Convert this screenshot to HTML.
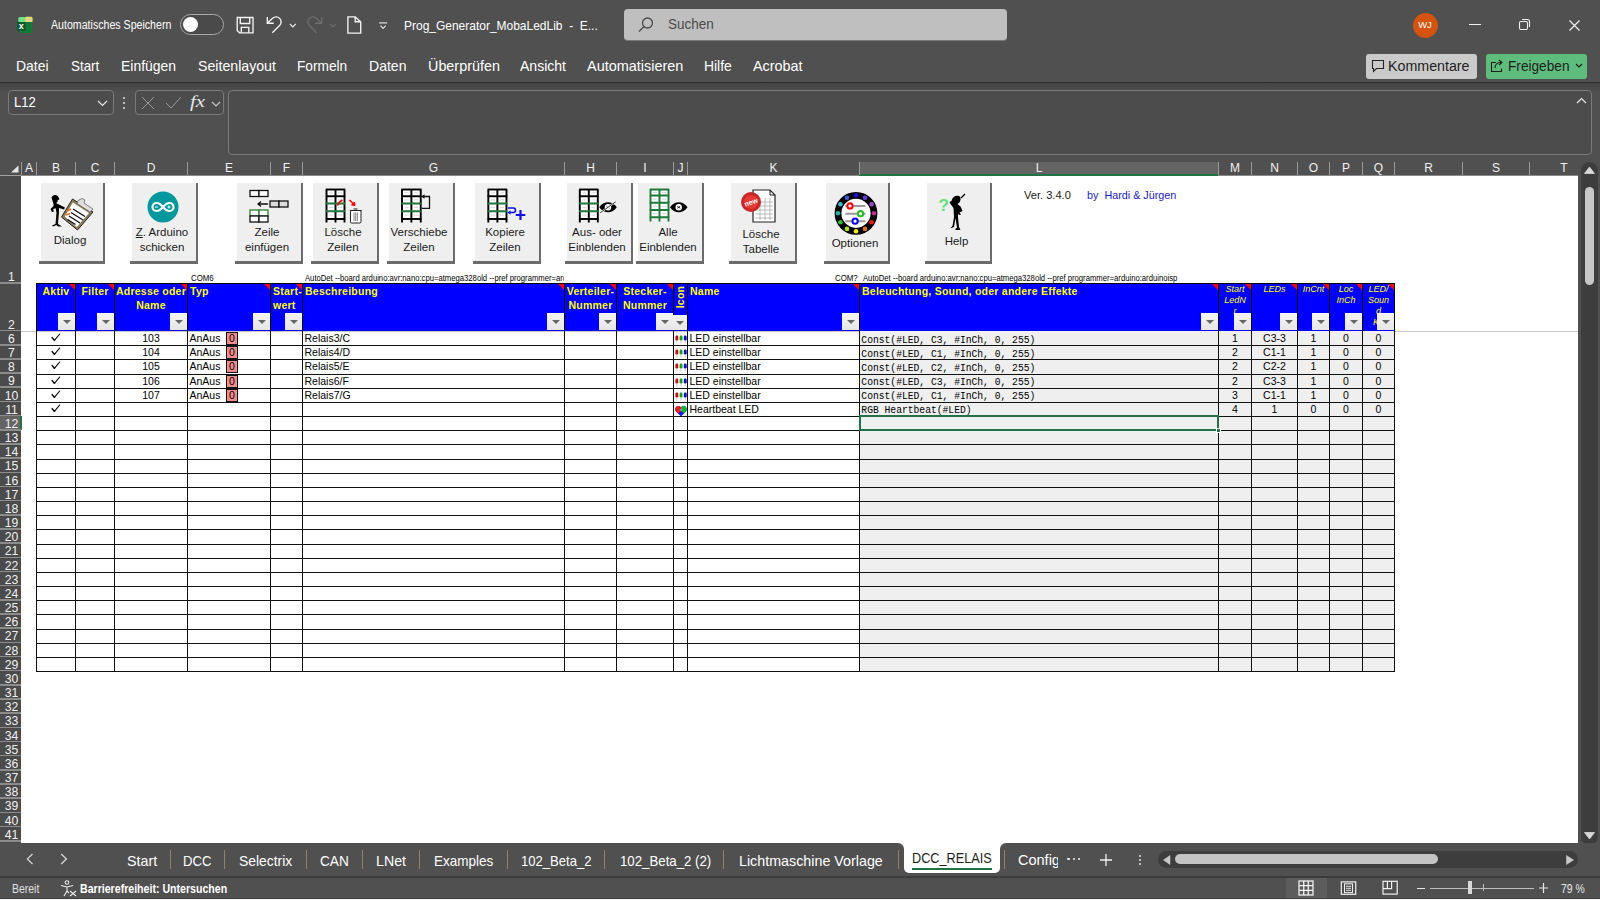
<!DOCTYPE html><html><head><meta charset="utf-8"><style>
*{margin:0;padding:0;box-sizing:border-box}
html,body{width:1600px;height:900px;overflow:hidden;background:#505050;font-family:"Liberation Sans", sans-serif;}
.a{position:absolute}
.ui{color:#fff;font-family:"Liberation Sans", sans-serif;white-space:nowrap;position:absolute}
.hd{position:absolute;color:#ffff00;font-weight:bold;font-size:10.5px;line-height:14px;white-space:nowrap;overflow:hidden;letter-spacing:0.25px}
.hi{position:absolute;color:#ffff00;font-style:italic;font-size:9px;line-height:11px;white-space:nowrap;overflow:hidden;font-weight:normal}
.c{position:absolute;font-size:10.5px;line-height:14.8px;color:#000;white-space:nowrap;overflow:hidden}
.m{position:absolute;font-family:"Liberation Mono",monospace;font-size:10.6px;line-height:14px;color:#000;white-space:nowrap;transform:scaleX(0.912);transform-origin:0 0;margin-top:1.5px}
.flt{position:absolute;width:17px;height:17px;background:linear-gradient(#f4f4f4,#e6e6e6);}
.flt:after{content:"";position:absolute;left:5px;top:7px;border-left:4px solid transparent;border-right:4px solid transparent;border-top:4px solid #666}
.rt{position:absolute;width:0;height:0;border-left:6px solid transparent;border-top:6px solid #ff0000}
.btn{position:absolute;background:#efefef;border-right:2px solid #6b6b6b;border-bottom:3px solid #6b6b6b;}
.bt{position:absolute;left:-2px;width:100%;text-align:center;font-size:11.5px;line-height:15px;color:#1a1a1a;white-space:nowrap}
</style></head><body>
<svg class="a" style="left:16px;top:15px" width="18" height="19" viewBox="0 0 18 19">
<rect x="2.3" y="2" width="14" height="5.5" rx="1.5" fill="#6ee08a"/>
<rect x="9.5" y="2" width="6.7" height="5.5" rx="1" fill="#e6d38c" stroke="#e8e040" stroke-width="0.6"/>
<rect x="4" y="7" width="12.2" height="11" fill="#127a38"/>
<rect x="1" y="7" width="8.7" height="8.7" rx="0.5" fill="#0b5a2c"/>
<text x="5.3" y="14" font-size="9" font-weight="bold" fill="#fff" text-anchor="middle" font-family="Liberation Sans">x</text>
</svg>
<div style="position:absolute;left:51.00px;top:19.04px;font-family:'Liberation Sans',sans-serif;font-size:12px;line-height:12px;color:#fff;white-space:nowrap;transform:scaleX(0.8846);transform-origin:0.00px 0;">Automatisches Speichern</div>
<div style="position:absolute;left:180px;top:14px;width:44px;height:21px;border:1px solid #a8a8a8;border-radius:11px;background:#4a4a4a"></div>
<div style="position:absolute;left:183px;top:17px;width:15px;height:15px;border-radius:50%;background:#fff"></div>
<svg class="a" style="left:235px;top:16px" width="20" height="19" viewBox="0 0 20 19" fill="none" stroke="#f4f4f4" stroke-width="1.35">
<path d="M2.2 1.5H18V16.8H4.5L2.2 14.5z"/><path d="M5.3 1.5V7.5H14.7V1.5"/><path d="M6.3 16.8V11.3H13.8V16.8"/></svg>
<svg class="a" style="left:264px;top:15px" width="20" height="20" viewBox="0 0 20 20" fill="none" stroke="#f4f4f4" stroke-width="1.35">
<path d="M3.3 2V8.2H9.8"/><path d="M3.5 8L8.6 3.3A4.95 4.95 0 0 1 15.6 10.4L8.3 17.7"/></svg>
<svg class="a" style="left:288.5px;top:22.5px" width="8" height="5" viewBox="0 0 8 5" fill="none" stroke="#f0f0f0" stroke-width="1.2"><path d="M0.8 0.8l3 3 3-3"/></svg>
<svg class="a" style="left:305px;top:15px" width="20" height="20" viewBox="0 0 20 20" fill="none" stroke="#6e6e6e" stroke-width="1.35">
<path d="M16.7 2V8.2H10.2"/><path d="M16.5 8L11.4 3.3A4.95 4.95 0 0 0 4.4 10.4L11.7 17.7"/></svg>
<svg class="a" style="left:328.5px;top:22.5px" width="8" height="5" viewBox="0 0 8 5" fill="none" stroke="#6e6e6e" stroke-width="1.2"><path d="M0.8 0.8l3 3 3-3"/></svg>
<svg class="a" style="left:346px;top:16px" width="17" height="19" viewBox="0 0 17 19" fill="none" stroke="#f4f4f4" stroke-width="1.35">
<path d="M1.9 0.9H9.2L14.7 5.7V17.1H1.9z"/><path d="M9.2 0.9V5.7H14.7"/></svg>
<svg class="a" style="left:378px;top:21px" width="10" height="9" viewBox="0 0 10 9" fill="none" stroke="#e0e0e0" stroke-width="1.2"><path d="M1.1 1.9H9.1"/><path d="M2.5 4.7L5.1 7.4L7.7 4.7"/></svg>
<div style="position:absolute;left:403.75px;top:18.99px;font-family:'Liberation Sans',sans-serif;font-size:13px;line-height:13px;color:#fff;white-space:nowrap;transform:scaleX(0.9213);transform-origin:0.00px 0;white-space:pre">Prog_Generator_MobaLedLib  -  E...</div>
<div style="position:absolute;left:624.4px;top:8.5px;width:383px;height:32.7px;background:#bfbfbf;border-radius:4px;border-bottom:1px solid #7a7a7a"></div>
<svg class="a" style="left:637px;top:16px" width="18" height="18" viewBox="0 0 18 18" fill="none" stroke="#4a4a4a" stroke-width="1.3">
<circle cx="10.5" cy="7" r="5"/><path d="M7 10.5L2 15.5"/></svg>
<div style="position:absolute;left:667.75px;top:17.15px;font-family:'Liberation Sans',sans-serif;font-size:14px;line-height:14px;color:#4a4a4a;white-space:nowrap;transform:scaleX(0.9632);transform-origin:0.00px 0;">Suchen</div>
<div style="position:absolute;left:1412.5px;top:12.5px;width:25px;height:25px;border-radius:50%;background:#d3530f"></div>
<div style="position:absolute;left:1418.15px;top:20.46px;font-family:'Liberation Sans',sans-serif;font-size:9.5px;line-height:9.5px;color:#fff;white-space:nowrap;">WJ</div>
<div style="position:absolute;left:1469px;top:24px;width:12px;height:1px;background:#f0f0f0"></div>
<svg class="a" style="left:1518px;top:18px" width="13" height="13" viewBox="0 0 13 13" fill="none" stroke="#f0f0f0" stroke-width="1.1">
<rect x="1.5" y="3.5" width="8" height="8" rx="1.5"/><path d="M4 1.5h5.5a2 2 0 0 1 2 2v5.5"/></svg>
<svg class="a" style="left:1569px;top:19.5px" width="11" height="11" viewBox="0 0 11 11" fill="none" stroke="#f0f0f0" stroke-width="1.15">
<path d="M0.5 0.5l10 10M10.5 0.5l-10 10"/></svg>
<div style="position:absolute;left:16.20px;top:59.42px;font-family:'Liberation Sans',sans-serif;font-size:14.5px;line-height:14.5px;color:#fff;white-space:nowrap;transform:scaleX(0.9601);transform-origin:0.00px 0;">Datei</div>
<div style="position:absolute;left:71.20px;top:59.42px;font-family:'Liberation Sans',sans-serif;font-size:14.5px;line-height:14.5px;color:#fff;white-space:nowrap;transform:scaleX(0.9216);transform-origin:0.00px 0;">Start</div>
<div style="position:absolute;left:121.10px;top:59.42px;font-family:'Liberation Sans',sans-serif;font-size:14.5px;line-height:14.5px;color:#fff;white-space:nowrap;transform:scaleX(0.9624);transform-origin:0.00px 0;">Einfügen</div>
<div style="position:absolute;left:197.80px;top:59.42px;font-family:'Liberation Sans',sans-serif;font-size:14.5px;line-height:14.5px;color:#fff;white-space:nowrap;transform:scaleX(0.9762);transform-origin:0.00px 0;">Seitenlayout</div>
<div style="position:absolute;left:297.30px;top:59.42px;font-family:'Liberation Sans',sans-serif;font-size:14.5px;line-height:14.5px;color:#fff;white-space:nowrap;transform:scaleX(0.9436);transform-origin:0.00px 0;">Formeln</div>
<div style="position:absolute;left:368.50px;top:59.42px;font-family:'Liberation Sans',sans-serif;font-size:14.5px;line-height:14.5px;color:#fff;white-space:nowrap;transform:scaleX(0.9690);transform-origin:0.00px 0;">Daten</div>
<div style="position:absolute;left:427.70px;top:59.42px;font-family:'Liberation Sans',sans-serif;font-size:14.5px;line-height:14.5px;color:#fff;white-space:nowrap;transform:scaleX(0.9910);transform-origin:0.00px 0;">Überprüfen</div>
<div style="position:absolute;left:520.20px;top:59.42px;font-family:'Liberation Sans',sans-serif;font-size:14.5px;line-height:14.5px;color:#fff;white-space:nowrap;transform:scaleX(0.9674);transform-origin:0.00px 0;">Ansicht</div>
<div style="position:absolute;left:586.80px;top:59.42px;font-family:'Liberation Sans',sans-serif;font-size:14.5px;line-height:14.5px;color:#fff;white-space:nowrap;transform:scaleX(0.9959);transform-origin:0.00px 0;">Automatisieren</div>
<div style="position:absolute;left:704.30px;top:59.42px;font-family:'Liberation Sans',sans-serif;font-size:14.5px;line-height:14.5px;color:#fff;white-space:nowrap;transform:scaleX(0.9552);transform-origin:0.00px 0;">Hilfe</div>
<div style="position:absolute;left:753.20px;top:59.42px;font-family:'Liberation Sans',sans-serif;font-size:14.5px;line-height:14.5px;color:#fff;white-space:nowrap;transform:scaleX(0.9910);transform-origin:0.00px 0;">Acrobat</div>
<div style="position:absolute;left:1366px;top:54px;width:111px;height:25px;background:#cacaca;border-radius:3px"></div>
<svg class="a" style="left:1371px;top:59px" width="14" height="14" viewBox="0 0 14 14" fill="none" stroke="#262626" stroke-width="1.1">
<path d="M1.5 1.5h11v8h-7l-3 3v-3h-1z"/></svg>
<div style="position:absolute;left:1388.00px;top:58.95px;font-family:'Liberation Sans',sans-serif;font-size:14px;line-height:14px;color:#1e1e1e;white-space:nowrap;transform:scaleX(1.0168);transform-origin:0.00px 0;">Kommentare</div>
<div style="position:absolute;left:1486px;top:54px;width:101px;height:25px;background:#5ebd7d;border-radius:3px"></div>
<svg class="a" style="left:1490px;top:59px" width="15" height="14" viewBox="0 0 15 14" fill="none" stroke="#1e1e1e" stroke-width="1.1">
<path d="M6 3.5H1.5v9h10v-3"/><path d="M5 9c0-4 3-5.5 6-5.5"/><path d="M9 1l3 2.5-3 2.5"/></svg>
<div style="position:absolute;left:1508.00px;top:58.95px;font-family:'Liberation Sans',sans-serif;font-size:14px;line-height:14px;color:#1e1e1e;white-space:nowrap;transform:scaleX(0.9754);transform-origin:0.00px 0;">Freigeben</div>
<svg class="a" style="left:1575px;top:63px" width="8" height="6" viewBox="0 0 8 6" fill="none" stroke="#1e1e1e" stroke-width="1.2"><path d="M1 1l3 3 3-3"/></svg>
<div style="position:absolute;left:0px;top:81.5px;width:1600px;height:1.5px;background:#2c2c2c"></div>
<div style="position:absolute;left:0px;top:83px;width:1600px;height:8px;background:linear-gradient(#434343,#4e4e4e)"></div>
<div style="position:absolute;left:8px;top:90px;width:106px;height:25px;border:1px solid #7a7a7a;border-radius:4px;background:#4c4c4c"></div>
<div style="position:absolute;left:14.20px;top:95.42px;font-family:'Liberation Sans',sans-serif;font-size:14.5px;line-height:14.5px;color:#fff;white-space:nowrap;transform:scaleX(0.9008);transform-origin:0.00px 0;">L12</div>
<svg class="a" style="left:97px;top:100px" width="11" height="7" viewBox="0 0 11 7" fill="none" stroke="#e8e8e8" stroke-width="1.2"><path d="M1 1l4.5 4.5L10 1"/></svg>
<div style="position:absolute;left:123px;top:97px;width:2px;height:2px;background:#e0e0e0;border-radius:1px"></div>
<div style="position:absolute;left:123px;top:102px;width:2px;height:2px;background:#e0e0e0;border-radius:1px"></div>
<div style="position:absolute;left:123px;top:107px;width:2px;height:2px;background:#e0e0e0;border-radius:1px"></div>
<div style="position:absolute;left:135px;top:90px;width:89px;height:25px;border:1px solid #7a7a7a;border-radius:4px;background:#4c4c4c"></div>
<svg class="a" style="left:141px;top:96px" width="14" height="14" viewBox="0 0 14 14" fill="none" stroke="#9a9a9a" stroke-width="1"><path d="M1 1l12 12M13 1L1 13"/></svg>
<svg class="a" style="left:165px;top:96px" width="17" height="14" viewBox="0 0 17 14" fill="none" stroke="#9a9a9a" stroke-width="1"><path d="M1 7l5 5L16 1"/></svg>
<div style="position:absolute;left:190.40px;top:93.26px;font-family:'Liberation Serif',serif;font-size:17px;line-height:17px;color:#e8e8e8;white-space:nowrap;transform:scaleX(1.2245);transform-origin:0.00px 0;font-style:italic;">fx</div>
<svg class="a" style="left:211px;top:100.5px" width="10" height="6" viewBox="0 0 10 6" fill="none" stroke="#c8c8c8" stroke-width="1.1"><path d="M1 1l4 4 4-4"/></svg>
<div style="position:absolute;left:228px;top:90px;width:1364px;height:65px;border:1px solid #7a7a7a;border-radius:4px;background:#4c4c4c"></div>
<svg class="a" style="left:1576px;top:97px" width="11" height="7" viewBox="0 0 11 7" fill="none" stroke="#e8e8e8" stroke-width="1.2"><path d="M1 6l4.5-4.5L10 6"/></svg>
<svg class="a" style="left:10px;top:165px" width="9" height="8" viewBox="0 0 9 8"><path d="M8.5 0.5v7H1z" fill="#e8e8e8"/></svg>
<div style="position:absolute;left:0px;top:175px;width:21px;height:1px;background:#a0a0a0"></div>
<div style="position:absolute;left:21px;top:175px;width:1557px;height:1px;background:#8a8a8a"></div>
<div style="position:absolute;left:860px;top:162px;width:358px;height:14px;background:#646464"></div>
<div style="position:absolute;left:859px;top:174px;width:359px;height:2px;background:#217346"></div>
<div style="position:absolute;left:21px;top:162px;width:1px;height:13px;background:#9a9a9a"></div>
<div style="position:absolute;left:25.00px;top:162.34px;font-family:'Liberation Sans',sans-serif;font-size:12px;line-height:12px;color:#f0f0f0;white-space:nowrap;">A</div>
<div style="position:absolute;left:36px;top:162px;width:1px;height:13px;background:#9a9a9a"></div>
<div style="position:absolute;left:52.00px;top:162.34px;font-family:'Liberation Sans',sans-serif;font-size:12px;line-height:12px;color:#f0f0f0;white-space:nowrap;">B</div>
<div style="position:absolute;left:75px;top:162px;width:1px;height:13px;background:#9a9a9a"></div>
<div style="position:absolute;left:90.67px;top:162.34px;font-family:'Liberation Sans',sans-serif;font-size:12px;line-height:12px;color:#f0f0f0;white-space:nowrap;">C</div>
<div style="position:absolute;left:114px;top:162px;width:1px;height:13px;background:#9a9a9a"></div>
<div style="position:absolute;left:146.68px;top:162.34px;font-family:'Liberation Sans',sans-serif;font-size:12px;line-height:12px;color:#f0f0f0;white-space:nowrap;">D</div>
<div style="position:absolute;left:187px;top:162px;width:1px;height:13px;background:#9a9a9a"></div>
<div style="position:absolute;left:225.00px;top:162.34px;font-family:'Liberation Sans',sans-serif;font-size:12px;line-height:12px;color:#f0f0f0;white-space:nowrap;">E</div>
<div style="position:absolute;left:270px;top:162px;width:1px;height:13px;background:#9a9a9a"></div>
<div style="position:absolute;left:282.82px;top:162.34px;font-family:'Liberation Sans',sans-serif;font-size:12px;line-height:12px;color:#f0f0f0;white-space:nowrap;">F</div>
<div style="position:absolute;left:302px;top:162px;width:1px;height:13px;background:#9a9a9a"></div>
<div style="position:absolute;left:428.82px;top:162.34px;font-family:'Liberation Sans',sans-serif;font-size:12px;line-height:12px;color:#f0f0f0;white-space:nowrap;">G</div>
<div style="position:absolute;left:564px;top:162px;width:1px;height:13px;background:#9a9a9a"></div>
<div style="position:absolute;left:586.17px;top:162.34px;font-family:'Liberation Sans',sans-serif;font-size:12px;line-height:12px;color:#f0f0f0;white-space:nowrap;">H</div>
<div style="position:absolute;left:616px;top:162px;width:1px;height:13px;background:#9a9a9a"></div>
<div style="position:absolute;left:643.33px;top:162.34px;font-family:'Liberation Sans',sans-serif;font-size:12px;line-height:12px;color:#f0f0f0;white-space:nowrap;">I</div>
<div style="position:absolute;left:673px;top:162px;width:1px;height:13px;background:#9a9a9a"></div>
<div style="position:absolute;left:677.50px;top:162.34px;font-family:'Liberation Sans',sans-serif;font-size:12px;line-height:12px;color:#f0f0f0;white-space:nowrap;">J</div>
<div style="position:absolute;left:687px;top:162px;width:1px;height:13px;background:#9a9a9a"></div>
<div style="position:absolute;left:769.50px;top:162.34px;font-family:'Liberation Sans',sans-serif;font-size:12px;line-height:12px;color:#f0f0f0;white-space:nowrap;">K</div>
<div style="position:absolute;left:859px;top:162px;width:1px;height:13px;background:#9a9a9a"></div>
<div style="position:absolute;left:1035.67px;top:162.34px;font-family:'Liberation Sans',sans-serif;font-size:12px;line-height:12px;color:#f0f0f0;white-space:nowrap;">L</div>
<div style="position:absolute;left:1218px;top:162px;width:1px;height:13px;background:#9a9a9a"></div>
<div style="position:absolute;left:1230.00px;top:162.34px;font-family:'Liberation Sans',sans-serif;font-size:12px;line-height:12px;color:#f0f0f0;white-space:nowrap;">M</div>
<div style="position:absolute;left:1251px;top:162px;width:1px;height:13px;background:#9a9a9a"></div>
<div style="position:absolute;left:1270.17px;top:162.34px;font-family:'Liberation Sans',sans-serif;font-size:12px;line-height:12px;color:#f0f0f0;white-space:nowrap;">N</div>
<div style="position:absolute;left:1297px;top:162px;width:1px;height:13px;background:#9a9a9a"></div>
<div style="position:absolute;left:1308.83px;top:162.34px;font-family:'Liberation Sans',sans-serif;font-size:12px;line-height:12px;color:#f0f0f0;white-space:nowrap;">O</div>
<div style="position:absolute;left:1329px;top:162px;width:1px;height:13px;background:#9a9a9a"></div>
<div style="position:absolute;left:1342.00px;top:162.34px;font-family:'Liberation Sans',sans-serif;font-size:12px;line-height:12px;color:#f0f0f0;white-space:nowrap;">P</div>
<div style="position:absolute;left:1362px;top:162px;width:1px;height:13px;background:#9a9a9a"></div>
<div style="position:absolute;left:1373.83px;top:162.34px;font-family:'Liberation Sans',sans-serif;font-size:12px;line-height:12px;color:#f0f0f0;white-space:nowrap;">Q</div>
<div style="position:absolute;left:1394px;top:162px;width:1px;height:13px;background:#9a9a9a"></div>
<div style="position:absolute;left:1424.17px;top:162.34px;font-family:'Liberation Sans',sans-serif;font-size:12px;line-height:12px;color:#f0f0f0;white-space:nowrap;">R</div>
<div style="position:absolute;left:1462px;top:162px;width:1px;height:13px;background:#9a9a9a"></div>
<div style="position:absolute;left:1492.00px;top:162.34px;font-family:'Liberation Sans',sans-serif;font-size:12px;line-height:12px;color:#f0f0f0;white-space:nowrap;">S</div>
<div style="position:absolute;left:1529px;top:162px;width:1px;height:13px;background:#9a9a9a"></div>
<div style="position:absolute;left:1560.33px;top:162.34px;font-family:'Liberation Sans',sans-serif;font-size:12px;line-height:12px;color:#f0f0f0;white-space:nowrap;">T</div>
<div style="position:absolute;left:21px;top:176px;width:1557px;height:667px;background:#fff"></div>
<div style="position:absolute;left:0px;top:176px;width:21px;height:667px;background:#4b4b4b"></div>
<div style="position:absolute;left:0px;top:282.3px;width:21px;height:1.6px;background:#8c8c8c"></div>
<div style="position:absolute;left:8.10px;top:271.17px;font-family:'Liberation Sans',sans-serif;font-size:12.2px;line-height:12.2px;color:#f0f0f0;white-space:nowrap;">1</div>
<div style="position:absolute;left:0px;top:329.8px;width:21px;height:1.6px;background:#8c8c8c"></div>
<div style="position:absolute;left:8.10px;top:318.67px;font-family:'Liberation Sans',sans-serif;font-size:12.2px;line-height:12.2px;color:#f0f0f0;white-space:nowrap;">2</div>
<div style="position:absolute;left:0px;top:343.97px;width:21px;height:1.6px;background:#8c8c8c"></div>
<div style="position:absolute;left:8.10px;top:332.84px;font-family:'Liberation Sans',sans-serif;font-size:12.2px;line-height:12.2px;color:#f0f0f0;white-space:nowrap;">6</div>
<div style="position:absolute;left:0px;top:358.14px;width:21px;height:1.6px;background:#8c8c8c"></div>
<div style="position:absolute;left:8.10px;top:347.01px;font-family:'Liberation Sans',sans-serif;font-size:12.2px;line-height:12.2px;color:#f0f0f0;white-space:nowrap;">7</div>
<div style="position:absolute;left:0px;top:372.31px;width:21px;height:1.6px;background:#8c8c8c"></div>
<div style="position:absolute;left:8.10px;top:361.18px;font-family:'Liberation Sans',sans-serif;font-size:12.2px;line-height:12.2px;color:#f0f0f0;white-space:nowrap;">8</div>
<div style="position:absolute;left:0px;top:386.48px;width:21px;height:1.6px;background:#8c8c8c"></div>
<div style="position:absolute;left:8.10px;top:375.35px;font-family:'Liberation Sans',sans-serif;font-size:12.2px;line-height:12.2px;color:#f0f0f0;white-space:nowrap;">9</div>
<div style="position:absolute;left:0px;top:400.65000000000003px;width:21px;height:1.6px;background:#8c8c8c"></div>
<div style="position:absolute;left:4.72px;top:389.52px;font-family:'Liberation Sans',sans-serif;font-size:12.2px;line-height:12.2px;color:#f0f0f0;white-space:nowrap;">10</div>
<div style="position:absolute;left:0px;top:414.82px;width:21px;height:1.6px;background:#8c8c8c"></div>
<div style="position:absolute;left:5.17px;top:403.69px;font-family:'Liberation Sans',sans-serif;font-size:12.2px;line-height:12.2px;color:#f0f0f0;white-space:nowrap;">11</div>
<div style="position:absolute;left:0px;top:416px;width:21px;height:14px;background:#646464"></div>
<div style="position:absolute;left:19.5px;top:416px;width:2px;height:14px;background:#217346"></div>
<div style="position:absolute;left:0px;top:428.99px;width:21px;height:1.6px;background:#8c8c8c"></div>
<div style="position:absolute;left:4.72px;top:417.86px;font-family:'Liberation Sans',sans-serif;font-size:12.2px;line-height:12.2px;color:#f0f0f0;white-space:nowrap;">12</div>
<div style="position:absolute;left:0px;top:443.16px;width:21px;height:1.6px;background:#8c8c8c"></div>
<div style="position:absolute;left:4.72px;top:432.03px;font-family:'Liberation Sans',sans-serif;font-size:12.2px;line-height:12.2px;color:#f0f0f0;white-space:nowrap;">13</div>
<div style="position:absolute;left:0px;top:457.33px;width:21px;height:1.6px;background:#8c8c8c"></div>
<div style="position:absolute;left:4.72px;top:446.20px;font-family:'Liberation Sans',sans-serif;font-size:12.2px;line-height:12.2px;color:#f0f0f0;white-space:nowrap;">14</div>
<div style="position:absolute;left:0px;top:471.5px;width:21px;height:1.6px;background:#8c8c8c"></div>
<div style="position:absolute;left:4.72px;top:460.37px;font-family:'Liberation Sans',sans-serif;font-size:12.2px;line-height:12.2px;color:#f0f0f0;white-space:nowrap;">15</div>
<div style="position:absolute;left:0px;top:485.67px;width:21px;height:1.6px;background:#8c8c8c"></div>
<div style="position:absolute;left:4.72px;top:474.54px;font-family:'Liberation Sans',sans-serif;font-size:12.2px;line-height:12.2px;color:#f0f0f0;white-space:nowrap;">16</div>
<div style="position:absolute;left:0px;top:499.84px;width:21px;height:1.6px;background:#8c8c8c"></div>
<div style="position:absolute;left:4.72px;top:488.71px;font-family:'Liberation Sans',sans-serif;font-size:12.2px;line-height:12.2px;color:#f0f0f0;white-space:nowrap;">17</div>
<div style="position:absolute;left:0px;top:514.01px;width:21px;height:1.6px;background:#8c8c8c"></div>
<div style="position:absolute;left:4.72px;top:502.88px;font-family:'Liberation Sans',sans-serif;font-size:12.2px;line-height:12.2px;color:#f0f0f0;white-space:nowrap;">18</div>
<div style="position:absolute;left:0px;top:528.18px;width:21px;height:1.6px;background:#8c8c8c"></div>
<div style="position:absolute;left:4.72px;top:517.05px;font-family:'Liberation Sans',sans-serif;font-size:12.2px;line-height:12.2px;color:#f0f0f0;white-space:nowrap;">19</div>
<div style="position:absolute;left:0px;top:542.3499999999999px;width:21px;height:1.6px;background:#8c8c8c"></div>
<div style="position:absolute;left:4.72px;top:531.22px;font-family:'Liberation Sans',sans-serif;font-size:12.2px;line-height:12.2px;color:#f0f0f0;white-space:nowrap;">20</div>
<div style="position:absolute;left:0px;top:556.52px;width:21px;height:1.6px;background:#8c8c8c"></div>
<div style="position:absolute;left:4.72px;top:545.39px;font-family:'Liberation Sans',sans-serif;font-size:12.2px;line-height:12.2px;color:#f0f0f0;white-space:nowrap;">21</div>
<div style="position:absolute;left:0px;top:570.6899999999999px;width:21px;height:1.6px;background:#8c8c8c"></div>
<div style="position:absolute;left:4.72px;top:559.56px;font-family:'Liberation Sans',sans-serif;font-size:12.2px;line-height:12.2px;color:#f0f0f0;white-space:nowrap;">22</div>
<div style="position:absolute;left:0px;top:584.8599999999999px;width:21px;height:1.6px;background:#8c8c8c"></div>
<div style="position:absolute;left:4.72px;top:573.73px;font-family:'Liberation Sans',sans-serif;font-size:12.2px;line-height:12.2px;color:#f0f0f0;white-space:nowrap;">23</div>
<div style="position:absolute;left:0px;top:599.03px;width:21px;height:1.6px;background:#8c8c8c"></div>
<div style="position:absolute;left:4.72px;top:587.90px;font-family:'Liberation Sans',sans-serif;font-size:12.2px;line-height:12.2px;color:#f0f0f0;white-space:nowrap;">24</div>
<div style="position:absolute;left:0px;top:613.1999999999999px;width:21px;height:1.6px;background:#8c8c8c"></div>
<div style="position:absolute;left:4.72px;top:602.07px;font-family:'Liberation Sans',sans-serif;font-size:12.2px;line-height:12.2px;color:#f0f0f0;white-space:nowrap;">25</div>
<div style="position:absolute;left:0px;top:627.3699999999999px;width:21px;height:1.6px;background:#8c8c8c"></div>
<div style="position:absolute;left:4.72px;top:616.24px;font-family:'Liberation Sans',sans-serif;font-size:12.2px;line-height:12.2px;color:#f0f0f0;white-space:nowrap;">26</div>
<div style="position:absolute;left:0px;top:641.54px;width:21px;height:1.6px;background:#8c8c8c"></div>
<div style="position:absolute;left:4.72px;top:630.41px;font-family:'Liberation Sans',sans-serif;font-size:12.2px;line-height:12.2px;color:#f0f0f0;white-space:nowrap;">27</div>
<div style="position:absolute;left:0px;top:655.71px;width:21px;height:1.6px;background:#8c8c8c"></div>
<div style="position:absolute;left:4.72px;top:644.58px;font-family:'Liberation Sans',sans-serif;font-size:12.2px;line-height:12.2px;color:#f0f0f0;white-space:nowrap;">28</div>
<div style="position:absolute;left:0px;top:669.8799999999999px;width:21px;height:1.6px;background:#8c8c8c"></div>
<div style="position:absolute;left:4.72px;top:658.75px;font-family:'Liberation Sans',sans-serif;font-size:12.2px;line-height:12.2px;color:#f0f0f0;white-space:nowrap;">29</div>
<div style="position:absolute;left:0px;top:684.05px;width:21px;height:1.6px;background:#8c8c8c"></div>
<div style="position:absolute;left:4.72px;top:672.92px;font-family:'Liberation Sans',sans-serif;font-size:12.2px;line-height:12.2px;color:#f0f0f0;white-space:nowrap;">30</div>
<div style="position:absolute;left:0px;top:698.22px;width:21px;height:1.6px;background:#8c8c8c"></div>
<div style="position:absolute;left:4.72px;top:687.09px;font-family:'Liberation Sans',sans-serif;font-size:12.2px;line-height:12.2px;color:#f0f0f0;white-space:nowrap;">31</div>
<div style="position:absolute;left:0px;top:712.3899999999999px;width:21px;height:1.6px;background:#8c8c8c"></div>
<div style="position:absolute;left:4.72px;top:701.26px;font-family:'Liberation Sans',sans-serif;font-size:12.2px;line-height:12.2px;color:#f0f0f0;white-space:nowrap;">32</div>
<div style="position:absolute;left:0px;top:726.56px;width:21px;height:1.6px;background:#8c8c8c"></div>
<div style="position:absolute;left:4.72px;top:715.43px;font-family:'Liberation Sans',sans-serif;font-size:12.2px;line-height:12.2px;color:#f0f0f0;white-space:nowrap;">33</div>
<div style="position:absolute;left:0px;top:740.73px;width:21px;height:1.6px;background:#8c8c8c"></div>
<div style="position:absolute;left:4.72px;top:729.60px;font-family:'Liberation Sans',sans-serif;font-size:12.2px;line-height:12.2px;color:#f0f0f0;white-space:nowrap;">34</div>
<div style="position:absolute;left:0px;top:754.9px;width:21px;height:1.6px;background:#8c8c8c"></div>
<div style="position:absolute;left:4.72px;top:743.77px;font-family:'Liberation Sans',sans-serif;font-size:12.2px;line-height:12.2px;color:#f0f0f0;white-space:nowrap;">35</div>
<div style="position:absolute;left:0px;top:769.0699999999999px;width:21px;height:1.6px;background:#8c8c8c"></div>
<div style="position:absolute;left:4.72px;top:757.94px;font-family:'Liberation Sans',sans-serif;font-size:12.2px;line-height:12.2px;color:#f0f0f0;white-space:nowrap;">36</div>
<div style="position:absolute;left:0px;top:783.24px;width:21px;height:1.6px;background:#8c8c8c"></div>
<div style="position:absolute;left:4.72px;top:772.11px;font-family:'Liberation Sans',sans-serif;font-size:12.2px;line-height:12.2px;color:#f0f0f0;white-space:nowrap;">37</div>
<div style="position:absolute;left:0px;top:797.41px;width:21px;height:1.6px;background:#8c8c8c"></div>
<div style="position:absolute;left:4.72px;top:786.28px;font-family:'Liberation Sans',sans-serif;font-size:12.2px;line-height:12.2px;color:#f0f0f0;white-space:nowrap;">38</div>
<div style="position:absolute;left:0px;top:811.5799999999999px;width:21px;height:1.6px;background:#8c8c8c"></div>
<div style="position:absolute;left:4.72px;top:800.45px;font-family:'Liberation Sans',sans-serif;font-size:12.2px;line-height:12.2px;color:#f0f0f0;white-space:nowrap;">39</div>
<div style="position:absolute;left:0px;top:825.75px;width:21px;height:1.6px;background:#8c8c8c"></div>
<div style="position:absolute;left:4.72px;top:814.62px;font-family:'Liberation Sans',sans-serif;font-size:12.2px;line-height:12.2px;color:#f0f0f0;white-space:nowrap;">40</div>
<div style="position:absolute;left:0px;top:839.92px;width:21px;height:1.6px;background:#8c8c8c"></div>
<div style="position:absolute;left:4.72px;top:828.79px;font-family:'Liberation Sans',sans-serif;font-size:12.2px;line-height:12.2px;color:#f0f0f0;white-space:nowrap;">41</div>
<div style="position:absolute;left:21px;top:331px;width:1557px;height:1px;background:#c8c8c8"></div>
<div class="btn" style="left:41px;top:183px;width:64px;height:81px"><svg class="a" style="left:0;top:0" width="62" height="78" viewBox="0 0 62 78">
<path d="M31.5 16L52 29L36.5 47L20.5 34z" fill="#8c7d5a" stroke="#222" stroke-width="1"/>
<path d="M31.8 19.5L48 30L35.8 44L23.8 33.6z" fill="#fff"/>
<path d="M37 17.5l4-2 3 1.5-1 3 9 6-3 3-13-8.5z" fill="#ddd" stroke="#555" stroke-width="0.7"/>
<path d="M32 26l12 7.5M30 29.5l12 7.5M28 33l11 7M26.5 36.5l8 5" stroke="#111" stroke-width="1.3"/>
<path d="M26 28l4-2M25 32l4-1.5" stroke="#f07020" stroke-width="1.5"/>
<path d="M10.5 14.5c1-3 5-3.5 6.5-1l1.5 2.5-2 1.5v1.5l-1.5 1 3 1.5 6 3-1 2-5-1.5v4l-1 12 4 2.5h-4l-1.5-1.5-3.5 1.5-1-1 3.5-1.5 1-11.5-1-4.5-2.5 1.5 1 2-2 0.5-1.5-3 3-3 0-2z" fill="#000"/>
</svg><div class="bt" style="top:50px">Dialog</div></div><div style="position:absolute;left:39px;top:261px;width:3px;height:3px;background:#6b6b6b"></div>
<div class="btn" style="left:132px;top:183px;width:66px;height:81px"><svg class="a" style="left:15px;top:8px" width="32" height="32" viewBox="0 0 32 32">
<circle cx="16" cy="16" r="15.5" fill="#00979d"/><path d="M16 16c-2.5-3-4-4-6.5-4a4 4 0 0 0 0 8c2.5 0 4-1 6.5-4c2.5 3 4 4 6.5 4a4 4 0 0 0 0-8c-2.5 0-4 1-6.5 4z" fill="none" stroke="#fff" stroke-width="2.2"/>
<path d="M8 16h3M20.5 16h3M22 14.5v3" stroke="#fff" stroke-width="1"/></svg><div class="bt" style="top:42px"><u>Z</u>. Arduino</div><div class="bt" style="top:57px">schicken</div></div><div style="position:absolute;left:130px;top:261px;width:3px;height:3px;background:#6b6b6b"></div>
<div class="btn" style="left:237px;top:183px;width:66px;height:81px"><svg class="a" style="left:11.5px;top:5px" width="44" height="40" viewBox="0 0 44 40">
<rect x="1" y="2.5" width="9" height="6" fill="#fff" stroke="#111" stroke-width="1.3"/><rect x="10" y="2.5" width="9" height="6" fill="#fff" stroke="#111" stroke-width="1.3"/>
<rect x="21" y="13" width="9" height="6" fill="#ddd" stroke="#111" stroke-width="1.3"/><rect x="30" y="13" width="9" height="6" fill="#ddd" stroke="#111" stroke-width="1.3"/>
<path d="M19 16H9M12 13.5L9 16l3 2.5" stroke="#111" stroke-width="1.3" fill="none"/>
<rect x="1" y="22" width="9" height="6" fill="#fff" stroke="#2e7d32" stroke-width="1.3"/><rect x="10" y="22" width="9" height="6" fill="#fff" stroke="#2e7d32" stroke-width="1.3"/>
<rect x="1" y="28" width="9" height="6" fill="#fff" stroke="#111" stroke-width="1.3"/><rect x="10" y="28" width="9" height="6" fill="#fff" stroke="#111" stroke-width="1.3"/>
</svg><div class="bt" style="top:42px">Zeile</div><div class="bt" style="top:57px">einfügen</div></div><div style="position:absolute;left:235px;top:261px;width:3px;height:3px;background:#6b6b6b"></div>
<div class="btn" style="left:313px;top:183px;width:66px;height:81px"><svg class="a" style="left:0;top:0" width="66" height="78" viewBox="0 0 66 78"><rect x="14.70" y="7.70" width="6.60" height="4.35" fill="#fff"/><path d="M16.00 9.88h4.00" stroke="#ddd" stroke-width="1.2"/><rect x="23.70" y="7.70" width="6.60" height="4.35" fill="#fff"/><path d="M25.00 9.88h4.00" stroke="#ddd" stroke-width="1.2"/><rect x="14.70" y="14.45" width="6.60" height="4.85" fill="#fff"/><path d="M16.00 16.88h4.00" stroke="#ddd" stroke-width="1.2"/><rect x="23.70" y="14.45" width="6.60" height="4.85" fill="#fff"/><path d="M25.00 16.88h4.00" stroke="#ddd" stroke-width="1.2"/><rect x="14.70" y="21.70" width="6.60" height="5.35" fill="#fff"/><path d="M16.00 24.38h4.00" stroke="#ddd" stroke-width="1.2"/><rect x="23.70" y="21.70" width="6.60" height="5.35" fill="#fff"/><path d="M25.00 24.38h4.00" stroke="#ddd" stroke-width="1.2"/><rect x="14.70" y="29.45" width="6.60" height="5.35" fill="#fff"/><path d="M16.00 32.12h4.00" stroke="#ddd" stroke-width="1.2"/><rect x="23.70" y="29.45" width="6.60" height="5.35" fill="#fff"/><path d="M25.00 32.12h4.00" stroke="#ddd" stroke-width="1.2"/><path d="M13.50 6.50V39.50" stroke="#000" stroke-width="1.9"/><path d="M22.50 6.50V39.50" stroke="#000" stroke-width="1.9"/><path d="M31.50 6.50V39.50" stroke="#000" stroke-width="1.9"/><path d="M12.80 6.50H32.20" stroke="#000" stroke-width="1.9"/><path d="M12.80 13.25H32.20" stroke="#000" stroke-width="1.9"/><path d="M12.80 20.50H32.20" stroke="#1f7a3a" stroke-width="2.0"/><path d="M12.80 28.25H32.20" stroke="#1f7a3a" stroke-width="2.0"/><path d="M12.80 36.00H32.20" stroke="#000" stroke-width="1.9"/><path d="M24.5 22.5Q26 18.5 29.5 17" stroke="#f00" stroke-width="1.6" fill="none"/><path d="M36.5 17L41 21.5" stroke="#f00" stroke-width="1.6"/><path d="M38.5 22l3.5 0.5l-0.5 -3.5z" fill="#f00" stroke="#f00"/><rect x="37.5" y="27.5" width="10.5" height="12.5" rx="1.2" fill="#fff" stroke="#222" stroke-width="1"/><path d="M36.80000000000001 27.5h12M40.5 26h4" stroke="#222" stroke-width="1"/><path d="M41 29.5v8.5M42.69999999999999 29.5v8.5M44.39999999999998 29.5v8.5" stroke="#777" stroke-width="0.9"/></svg><div class="bt" style="top:42px">Lösche</div><div class="bt" style="top:57px">Zeilen</div></div><div style="position:absolute;left:311px;top:261px;width:3px;height:3px;background:#6b6b6b"></div>
<div class="btn" style="left:389px;top:183px;width:66px;height:81px"><svg class="a" style="left:0;top:0" width="66" height="78" viewBox="0 0 66 78"><rect x="14.20" y="7.70" width="6.97" height="4.35" fill="#fff"/><path d="M15.50 9.88h4.38" stroke="#ddd" stroke-width="1.2"/><rect x="23.57" y="7.70" width="6.97" height="4.35" fill="#fff"/><path d="M24.88 9.88h4.38" stroke="#ddd" stroke-width="1.2"/><rect x="14.20" y="14.45" width="6.97" height="4.85" fill="#fff"/><path d="M15.50 16.88h4.38" stroke="#ddd" stroke-width="1.2"/><rect x="23.57" y="14.45" width="6.97" height="4.85" fill="#fff"/><path d="M24.88 16.88h4.38" stroke="#ddd" stroke-width="1.2"/><rect x="14.20" y="21.70" width="6.97" height="5.35" fill="#fff"/><path d="M15.50 24.38h4.38" stroke="#ddd" stroke-width="1.2"/><rect x="23.57" y="21.70" width="6.97" height="5.35" fill="#fff"/><path d="M24.88 24.38h4.38" stroke="#ddd" stroke-width="1.2"/><rect x="14.20" y="29.45" width="6.97" height="5.35" fill="#fff"/><path d="M15.50 32.12h4.38" stroke="#ddd" stroke-width="1.2"/><rect x="23.57" y="29.45" width="6.97" height="5.35" fill="#fff"/><path d="M24.88 32.12h4.38" stroke="#ddd" stroke-width="1.2"/><path d="M13.00 6.50V39.50" stroke="#000" stroke-width="1.9"/><path d="M22.38 6.50V39.50" stroke="#000" stroke-width="1.9"/><path d="M31.75 6.50V39.50" stroke="#000" stroke-width="1.9"/><path d="M12.30 6.50H32.45" stroke="#000" stroke-width="1.9"/><path d="M12.30 13.25H32.45" stroke="#000" stroke-width="1.9"/><path d="M12.30 20.50H32.45" stroke="#1f7a3a" stroke-width="2.0"/><path d="M12.30 28.25H32.45" stroke="#1f7a3a" stroke-width="2.0"/><path d="M12.30 36.00H32.45" stroke="#000" stroke-width="1.9"/><path d="M33 13.5H40.5V25.30000000000001H33" stroke="#111" stroke-width="1.3" fill="none"/><path d="M32.5 13.5l3-2.2v4.4z" fill="#111"/></svg><div class="bt" style="top:42px">Verschiebe</div><div class="bt" style="top:57px">Zeilen</div></div><div style="position:absolute;left:387px;top:261px;width:3px;height:3px;background:#6b6b6b"></div>
<div class="btn" style="left:475px;top:183px;width:66px;height:81px"><svg class="a" style="left:0;top:0" width="66" height="78" viewBox="0 0 66 78"><rect x="14.50" y="7.70" width="6.70" height="4.35" fill="#fff"/><path d="M15.80 9.88h4.10" stroke="#ddd" stroke-width="1.2"/><rect x="23.60" y="7.70" width="6.70" height="4.35" fill="#fff"/><path d="M24.90 9.88h4.10" stroke="#ddd" stroke-width="1.2"/><rect x="14.50" y="14.45" width="6.70" height="4.85" fill="#fff"/><path d="M15.80 16.88h4.10" stroke="#ddd" stroke-width="1.2"/><rect x="23.60" y="14.45" width="6.70" height="4.85" fill="#fff"/><path d="M24.90 16.88h4.10" stroke="#ddd" stroke-width="1.2"/><rect x="14.50" y="21.70" width="6.70" height="5.35" fill="#fff"/><path d="M15.80 24.38h4.10" stroke="#ddd" stroke-width="1.2"/><rect x="23.60" y="21.70" width="6.70" height="5.35" fill="#fff"/><path d="M24.90 24.38h4.10" stroke="#ddd" stroke-width="1.2"/><rect x="14.50" y="29.45" width="6.70" height="5.35" fill="#fff"/><path d="M15.80 32.12h4.10" stroke="#ddd" stroke-width="1.2"/><rect x="23.60" y="29.45" width="6.70" height="5.35" fill="#fff"/><path d="M24.90 32.12h4.10" stroke="#ddd" stroke-width="1.2"/><path d="M13.30 6.50V39.50" stroke="#000" stroke-width="1.9"/><path d="M22.40 6.50V39.50" stroke="#000" stroke-width="1.9"/><path d="M31.50 6.50V39.50" stroke="#000" stroke-width="1.9"/><path d="M12.60 6.50H32.20" stroke="#000" stroke-width="1.9"/><path d="M12.60 13.25H32.20" stroke="#000" stroke-width="1.9"/><path d="M12.60 20.50H32.20" stroke="#1f7a3a" stroke-width="2.0"/><path d="M12.60 28.25H32.20" stroke="#1f7a3a" stroke-width="2.0"/><path d="M12.60 36.00H32.20" stroke="#000" stroke-width="1.9"/><path d="M33 25H38.5Q40.5 25 40.5 27.30000000000001Q40.5 29.5 38.5 29.5H34" stroke="#1010ee" stroke-width="1.5" fill="none"/><path d="M32.5 29.5l3-2.3v4.6z" fill="#1010ee"/><path d="M45.5 27v10M40.799999999999955 32h9.5" stroke="#1010ee" stroke-width="2.2"/></svg><div class="bt" style="top:42px">Kopiere</div><div class="bt" style="top:57px">Zeilen</div></div><div style="position:absolute;left:473px;top:261px;width:3px;height:3px;background:#6b6b6b"></div>
<div class="btn" style="left:567px;top:183px;width:66px;height:81px"><svg class="a" style="left:0;top:0" width="66" height="78" viewBox="0 0 66 78"><rect x="14.00" y="7.70" width="6.60" height="4.35" fill="#fff"/><path d="M15.30 9.88h4.00" stroke="#ddd" stroke-width="1.2"/><rect x="23.00" y="7.70" width="6.60" height="4.35" fill="#fff"/><path d="M24.30 9.88h4.00" stroke="#ddd" stroke-width="1.2"/><rect x="14.00" y="14.45" width="6.60" height="4.85" fill="#fff"/><path d="M15.30 16.88h4.00" stroke="#ddd" stroke-width="1.2"/><rect x="23.00" y="14.45" width="6.60" height="4.85" fill="#fff"/><path d="M24.30 16.88h4.00" stroke="#ddd" stroke-width="1.2"/><rect x="14.00" y="21.70" width="6.60" height="5.35" fill="#fff"/><path d="M15.30 24.38h4.00" stroke="#ddd" stroke-width="1.2"/><rect x="23.00" y="21.70" width="6.60" height="5.35" fill="#fff"/><path d="M24.30 24.38h4.00" stroke="#ddd" stroke-width="1.2"/><rect x="14.00" y="29.45" width="6.60" height="5.35" fill="#fff"/><path d="M15.30 32.12h4.00" stroke="#ddd" stroke-width="1.2"/><rect x="23.00" y="29.45" width="6.60" height="5.35" fill="#fff"/><path d="M24.30 32.12h4.00" stroke="#ddd" stroke-width="1.2"/><path d="M12.80 6.50V39.50" stroke="#000" stroke-width="1.9"/><path d="M21.80 6.50V39.50" stroke="#000" stroke-width="1.9"/><path d="M30.80 6.50V39.50" stroke="#000" stroke-width="1.9"/><path d="M12.10 6.50H31.50" stroke="#000" stroke-width="1.9"/><path d="M12.10 13.25H31.50" stroke="#000" stroke-width="1.9"/><path d="M12.10 20.50H31.50" stroke="#1f7a3a" stroke-width="2.0"/><path d="M12.10 28.25H31.50" stroke="#1f7a3a" stroke-width="2.0"/><path d="M12.10 36.00H31.50" stroke="#000" stroke-width="1.9"/><path d="M32.25 24.25C36.62 17.50 45.38 17.50 49.75 24.25C45.38 31.00 36.62 31.00 32.25 24.25z" fill="#000"/><circle cx="41.00" cy="24.25" r="3.2" fill="#fff"/><path d="M39.50 23.25l3 2M39.50 25.25l3-2" stroke="#000" stroke-width="0.8"/><path d="M33.25 29.75L48.75 18.75" stroke="#fff" stroke-width="1.6"/><path d="M33.25 29.75L48.75 18.75" stroke="#000" stroke-width="0.8"/></svg><div class="bt" style="top:42px">Aus- oder</div><div class="bt" style="top:57px">Einblenden</div></div><div style="position:absolute;left:565px;top:261px;width:3px;height:3px;background:#6b6b6b"></div>
<div class="btn" style="left:638px;top:183px;width:66px;height:81px"><svg class="a" style="left:0;top:0" width="66" height="78" viewBox="0 0 66 78"><rect x="13.70" y="7.70" width="6.60" height="3.60" fill="#fff"/><path d="M15.00 9.50h4.00" stroke="#ddd" stroke-width="1.2"/><rect x="22.70" y="7.70" width="6.60" height="3.60" fill="#fff"/><path d="M24.00 9.50h4.00" stroke="#ddd" stroke-width="1.2"/><rect x="13.70" y="13.70" width="6.60" height="4.85" fill="#fff"/><path d="M15.00 16.12h4.00" stroke="#ddd" stroke-width="1.2"/><rect x="22.70" y="13.70" width="6.60" height="4.85" fill="#fff"/><path d="M24.00 16.12h4.00" stroke="#ddd" stroke-width="1.2"/><rect x="13.70" y="20.95" width="6.60" height="4.85" fill="#fff"/><path d="M15.00 23.38h4.00" stroke="#ddd" stroke-width="1.2"/><rect x="22.70" y="20.95" width="6.60" height="4.85" fill="#fff"/><path d="M24.00 23.38h4.00" stroke="#ddd" stroke-width="1.2"/><rect x="13.70" y="28.20" width="6.60" height="4.85" fill="#fff"/><path d="M15.00 30.62h4.00" stroke="#ddd" stroke-width="1.2"/><rect x="22.70" y="28.20" width="6.60" height="4.85" fill="#fff"/><path d="M24.00 30.62h4.00" stroke="#ddd" stroke-width="1.2"/><path d="M12.50 6.50V38.50" stroke="#1f7a3a" stroke-width="1.9"/><path d="M21.50 6.50V38.50" stroke="#1f7a3a" stroke-width="1.9"/><path d="M30.50 6.50V38.50" stroke="#1f7a3a" stroke-width="1.9"/><path d="M11.80 6.50H31.20" stroke="#1f7a3a" stroke-width="2.0"/><path d="M11.80 12.50H31.20" stroke="#1f7a3a" stroke-width="2.0"/><path d="M11.80 19.75H31.20" stroke="#1f7a3a" stroke-width="2.0"/><path d="M11.80 27.00H31.20" stroke="#1f7a3a" stroke-width="2.0"/><path d="M11.80 34.25H31.20" stroke="#1f7a3a" stroke-width="2.0"/><path d="M32.00 24.25C36.38 17.50 45.12 17.50 49.50 24.25C45.12 31.00 36.38 31.00 32.00 24.25z" fill="#000"/><circle cx="40.75" cy="24.25" r="3.2" fill="#fff"/><path d="M39.25 23.25l3 2M39.25 25.25l3-2" stroke="#000" stroke-width="0.8"/></svg><div class="bt" style="top:42px">Alle</div><div class="bt" style="top:57px">Einblenden</div></div><div style="position:absolute;left:636px;top:261px;width:3px;height:3px;background:#6b6b6b"></div>
<div class="btn" style="left:731px;top:183px;width:66px;height:81px"><svg class="a" style="left:9px;top:5px" width="44" height="40" viewBox="0 0 44 40">
<path d="M13 2h17l5 5v27H13z" fill="#fff" stroke="#222" stroke-width="1.2"/><path d="M30 2v5h5" fill="none" stroke="#222" stroke-width="1"/>
<path d="M15 14h18M15 18h18M15 22h18M15 26h18M15 30h18M20 10v22M25 10v22M30 10v22" stroke="#aaa" stroke-width="0.8"/>
<circle cx="11" cy="14" r="10" fill="#c62828"/><circle cx="11" cy="14" r="7" fill="#e53935"/><text x="11" y="16.5" font-size="7" font-weight="bold" fill="#fff" text-anchor="middle" transform="rotate(-20 11 14)" font-family="Liberation Sans">new</text></svg><div class="bt" style="top:44px">Lösche</div><div class="bt" style="top:59px">Tabelle</div></div><div style="position:absolute;left:729px;top:261px;width:3px;height:3px;background:#6b6b6b"></div>
<div class="btn" style="left:826px;top:183px;width:64px;height:81px"><svg class="a" style="left:0;top:0" width="62" height="78" viewBox="0 0 62 78"><circle cx="30" cy="30.3" r="18" fill="#fff" stroke="#000" stroke-width="6.8"/><circle cx="30.0" cy="12.3" r="2.3" fill="#1414e0"/><circle cx="39.0" cy="14.7" r="2.3" fill="#7038e0"/><circle cx="45.6" cy="21.3" r="2.3" fill="#a048d8"/><circle cx="48.0" cy="30.3" r="2.3" fill="#b83090"/><circle cx="45.6" cy="39.3" r="2.3" fill="#ff1414"/><circle cx="39.0" cy="45.9" r="2.3" fill="#e07028"/><circle cx="30.0" cy="48.3" r="2.3" fill="#f0f000"/><circle cx="21.0" cy="45.9" r="2.3" fill="#a8e020"/><circle cx="14.4" cy="39.3" r="2.3" fill="#30c030"/><circle cx="12.0" cy="30.3" r="2.3" fill="#20b0a8"/><circle cx="14.4" cy="21.3" r="2.3" fill="#38b8d8"/><circle cx="21.0" cy="14.7" r="2.3" fill="#3860d0"/><path d="M19.3 22.9h20.2M19.3 30.7h20.2M19.3 38.2h20.2" stroke="#999" stroke-width="2"/><circle cx="24" cy="22.9" r="2.6" fill="#fff" stroke="#f00" stroke-width="2"/><circle cx="34.6" cy="30.7" r="2.6" fill="#fff" stroke="#2b2" stroke-width="2"/><circle cx="29.1" cy="38.2" r="2.6" fill="#fff" stroke="#00f" stroke-width="2"/></svg><div class="bt" style="top:53px">Optionen</div></div><div style="position:absolute;left:824px;top:261px;width:3px;height:3px;background:#6b6b6b"></div>
<div class="btn" style="left:927px;top:183px;width:65px;height:81px"><svg class="a" style="left:0;top:0" width="63" height="78" viewBox="0 0 63 78">
<text x="16.8" y="27.5" font-size="17" font-weight="bold" fill="#5ee07a" text-anchor="middle" font-family="Liberation Sans">?</text>
<path d="M25 16.5c1-3 4-4.5 7-3.5 2 1 2 4 0.5 6.5l-2 1.5 3 2.5 2 4.5-3 1.5 1.5 2-1.5 0.5-1.5-1v3l1 10 1.5 3h-4.5l-1-1 2-1-1.5-10-1.5 9-2.5 1-1 0 2-2 1.5-9-0.5-9-3-4-1-2 2-1z" fill="#000"/>
<path d="M34 15l4-4" stroke="#000" stroke-width="1.2"/>
</svg><div class="bt" style="top:51px">Help</div></div><div style="position:absolute;left:925px;top:261px;width:3px;height:3px;background:#6b6b6b"></div>
<div style="position:absolute;left:1023.50px;top:189.91px;font-family:'Liberation Sans',sans-serif;font-size:10.5px;line-height:10.5px;color:#1a1a1a;white-space:nowrap;transform:scaleX(1.0552);transform-origin:0.00px 0;">Ver. 3.4.0</div>
<div style="position:absolute;left:1087.00px;top:189.91px;font-family:'Liberation Sans',sans-serif;font-size:10.5px;line-height:10.5px;color:#1a1ad0;white-space:nowrap;transform:scaleX(1.0270);transform-origin:0.00px 0;white-space:pre">by  Hardi &amp; Jürgen</div>
<div style="position:absolute;left:190.60px;top:273.97px;font-family:'Liberation Sans',sans-serif;font-size:8.3px;line-height:8.3px;color:#000;white-space:nowrap;transform:scaleX(0.9458);transform-origin:0.00px 0;">COM6</div>
<div class="a" style="left:302px;top:270px;width:262px;height:14px;overflow:hidden"><div style="position:absolute;left:3.20px;top:3.97px;font-family:'Liberation Sans',sans-serif;font-size:8.3px;line-height:8.3px;color:#000;white-space:nowrap;transform:scaleX(0.9258);transform-origin:0.00px 0;">AutoDet --board arduino:avr:nano:cpu=atmega328old --pref programmer=arduino:arduinoisp</div></div>
<div style="position:absolute;left:834.75px;top:273.72px;font-family:'Liberation Sans',sans-serif;font-size:8.3px;line-height:8.3px;color:#000;white-space:nowrap;transform:scaleX(0.9479);transform-origin:0.00px 0;">COM?</div>
<div style="position:absolute;left:862.50px;top:273.72px;font-family:'Liberation Sans',sans-serif;font-size:8.3px;line-height:8.3px;color:#000;white-space:nowrap;transform:scaleX(0.9258);transform-origin:0.00px 0;">AutoDet --board arduino:avr:nano:cpu=atmega328old --pref programmer=arduino:arduinoisp</div>
<div style="position:absolute;left:36px;top:283px;width:1359px;height:48px;background:#0000ff;border-top:1px solid #000"></div>
<div style="position:absolute;left:36px;top:283px;width:1px;height:48px;background:#000"></div>
<div style="position:absolute;left:75px;top:283px;width:1px;height:48px;background:#000"></div>
<div style="position:absolute;left:114px;top:283px;width:1px;height:48px;background:#000"></div>
<div style="position:absolute;left:187px;top:283px;width:1px;height:48px;background:#000"></div>
<div style="position:absolute;left:270px;top:283px;width:1px;height:48px;background:#000"></div>
<div style="position:absolute;left:302px;top:283px;width:1px;height:48px;background:#000"></div>
<div style="position:absolute;left:564px;top:283px;width:1px;height:48px;background:#000"></div>
<div style="position:absolute;left:616px;top:283px;width:1px;height:48px;background:#000"></div>
<div style="position:absolute;left:673px;top:283px;width:1px;height:48px;background:#000"></div>
<div style="position:absolute;left:687px;top:283px;width:1px;height:48px;background:#000"></div>
<div style="position:absolute;left:859px;top:283px;width:1px;height:48px;background:#000"></div>
<div style="position:absolute;left:1218px;top:283px;width:1px;height:48px;background:#000"></div>
<div style="position:absolute;left:1251px;top:283px;width:1px;height:48px;background:#000"></div>
<div style="position:absolute;left:1297px;top:283px;width:1px;height:48px;background:#000"></div>
<div style="position:absolute;left:1329px;top:283px;width:1px;height:48px;background:#000"></div>
<div style="position:absolute;left:1362px;top:283px;width:1px;height:48px;background:#000"></div>
<div style="position:absolute;left:1394px;top:283px;width:1px;height:48px;background:#000"></div>
<div class="hd" style="left:37px;top:284px;width:38px;height:47px;text-align:center;padding-left:0px">Aktiv</div>
<div class="hd" style="left:76px;top:284px;width:38px;height:47px;text-align:center;padding-left:0px">Filter</div>
<div class="hd" style="left:115px;top:284px;width:72px;height:47px;text-align:center;padding-left:0px">Adresse oder<br>Name</div>
<div class="hd" style="left:188px;top:284px;width:82px;height:47px;text-align:left;padding-left:2px">Typ</div>
<div class="hd" style="left:271px;top:284px;width:31px;height:47px;text-align:left;padding-left:2px">Start-<br>wert</div>
<div class="hd" style="left:303px;top:284px;width:261px;height:47px;text-align:left;padding-left:2px">Beschreibung</div>
<div class="hd" style="left:565px;top:284px;width:51px;height:47px;text-align:center;padding-left:0px">Verteiler-<br>Nummer</div>
<div class="hd" style="left:617px;top:284px;width:56px;height:47px;text-align:center;padding-left:0px">Stecker-<br>Nummer</div>
<div class="hd" style="left:688px;top:284px;width:171px;height:47px;text-align:left;padding-left:2px">Name</div>
<div class="hd" style="left:860px;top:284px;width:358px;height:47px;text-align:left;padding-left:2px">Beleuchtung, Sound, oder andere Effekte</div>
<div class="hd" style="left:660px;top:290px;width:40px;height:14px;transform:rotate(-90deg);text-align:center;line-height:14px">Icon</div>
<div class="hi" style="left:1219px;top:284px;width:32px;height:47px;text-align:center;white-space:normal">Start<br>LedN<br>r</div>
<div class="hi" style="left:1252px;top:284px;width:45px;height:47px;text-align:center;white-space:normal">LEDs</div>
<div class="hi" style="left:1298px;top:284px;width:31px;height:47px;text-align:center;white-space:normal">InCnt</div>
<div class="hi" style="left:1330px;top:284px;width:32px;height:47px;text-align:center;white-space:normal">Loc<br>InCh</div>
<div class="hi" style="left:1363px;top:284px;width:31px;height:47px;text-align:center;white-space:normal">LED/<br>Soun<br>d<br>Ka</div>
<div class="rt" style="left:69px;top:284px"></div>
<div class="rt" style="left:108px;top:284px"></div>
<div class="rt" style="left:181px;top:284px"></div>
<div class="rt" style="left:264px;top:284px"></div>
<div class="rt" style="left:296px;top:284px"></div>
<div class="rt" style="left:558px;top:284px"></div>
<div class="rt" style="left:610px;top:284px"></div>
<div class="rt" style="left:667px;top:284px"></div>
<div class="rt" style="left:853px;top:284px"></div>
<div class="rt" style="left:1212px;top:284px"></div>
<div class="rt" style="left:1245px;top:284px"></div>
<div class="rt" style="left:1291px;top:284px"></div>
<div class="rt" style="left:1323px;top:284px"></div>
<div class="rt" style="left:1356px;top:284px"></div>
<div class="rt" style="left:1388px;top:284px"></div>
<div class="flt" style="left:58px;top:313px"></div>
<div class="flt" style="left:97px;top:313px"></div>
<div class="flt" style="left:170px;top:313px"></div>
<div class="flt" style="left:253px;top:313px"></div>
<div class="flt" style="left:285px;top:313px"></div>
<div class="flt" style="left:547px;top:313px"></div>
<div class="flt" style="left:599px;top:313px"></div>
<div class="flt" style="left:656px;top:313px"></div>
<div class="a" style="left:673px;top:315px;width:14px;height:15px;background:linear-gradient(#f4f4f4,#e6e6e6)"><div class="a" style="left:3px;top:6px;border-left:4px solid transparent;border-right:4px solid transparent;border-top:4px solid #666"></div></div>
<div class="flt" style="left:842px;top:313px"></div>
<div class="flt" style="left:1201px;top:313px"></div>
<div class="flt" style="left:1234px;top:313px"></div>
<div class="flt" style="left:1280px;top:313px"></div>
<div class="flt" style="left:1312px;top:313px"></div>
<div class="flt" style="left:1345px;top:313px"></div>
<div class="flt" style="left:1377px;top:313px"></div>
<div style="position:absolute;left:859px;top:331px;width:535px;height:340px;background:#efefef"></div>
<div style="position:absolute;left:36px;top:331px;width:1px;height:341px;background:#111"></div>
<div style="position:absolute;left:75px;top:331px;width:1px;height:341px;background:#111"></div>
<div style="position:absolute;left:114px;top:331px;width:1px;height:341px;background:#111"></div>
<div style="position:absolute;left:187px;top:331px;width:1px;height:341px;background:#111"></div>
<div style="position:absolute;left:270px;top:331px;width:1px;height:341px;background:#111"></div>
<div style="position:absolute;left:302px;top:331px;width:1px;height:341px;background:#111"></div>
<div style="position:absolute;left:564px;top:331px;width:1px;height:341px;background:#111"></div>
<div style="position:absolute;left:616px;top:331px;width:1px;height:341px;background:#111"></div>
<div style="position:absolute;left:673px;top:331px;width:1px;height:341px;background:#111"></div>
<div style="position:absolute;left:687px;top:331px;width:1px;height:341px;background:#111"></div>
<div style="position:absolute;left:859px;top:331px;width:1px;height:341px;background:#111"></div>
<div style="position:absolute;left:1218px;top:331px;width:1px;height:341px;background:#111"></div>
<div style="position:absolute;left:1251px;top:331px;width:1px;height:341px;background:#111"></div>
<div style="position:absolute;left:1297px;top:331px;width:1px;height:341px;background:#111"></div>
<div style="position:absolute;left:1329px;top:331px;width:1px;height:341px;background:#111"></div>
<div style="position:absolute;left:1362px;top:331px;width:1px;height:341px;background:#111"></div>
<div style="position:absolute;left:1394px;top:331px;width:1px;height:341px;background:#111"></div>
<div style="position:absolute;left:36px;top:345px;width:1359px;height:1px;background:#111"></div>
<div style="position:absolute;left:36px;top:359px;width:1359px;height:1px;background:#111"></div>
<div style="position:absolute;left:36px;top:374px;width:1359px;height:1px;background:#111"></div>
<div style="position:absolute;left:36px;top:388px;width:1359px;height:1px;background:#111"></div>
<div style="position:absolute;left:36px;top:402px;width:1359px;height:1px;background:#111"></div>
<div style="position:absolute;left:36px;top:416px;width:1359px;height:1px;background:#111"></div>
<div style="position:absolute;left:36px;top:430px;width:1359px;height:1px;background:#111"></div>
<div style="position:absolute;left:36px;top:444px;width:1359px;height:1px;background:#111"></div>
<div style="position:absolute;left:36px;top:459px;width:1359px;height:1px;background:#111"></div>
<div style="position:absolute;left:36px;top:473px;width:1359px;height:1px;background:#111"></div>
<div style="position:absolute;left:36px;top:487px;width:1359px;height:1px;background:#111"></div>
<div style="position:absolute;left:36px;top:501px;width:1359px;height:1px;background:#111"></div>
<div style="position:absolute;left:36px;top:515px;width:1359px;height:1px;background:#111"></div>
<div style="position:absolute;left:36px;top:529px;width:1359px;height:1px;background:#111"></div>
<div style="position:absolute;left:36px;top:544px;width:1359px;height:1px;background:#111"></div>
<div style="position:absolute;left:36px;top:558px;width:1359px;height:1px;background:#111"></div>
<div style="position:absolute;left:36px;top:572px;width:1359px;height:1px;background:#111"></div>
<div style="position:absolute;left:36px;top:586px;width:1359px;height:1px;background:#111"></div>
<div style="position:absolute;left:36px;top:600px;width:1359px;height:1px;background:#111"></div>
<div style="position:absolute;left:36px;top:614px;width:1359px;height:1px;background:#111"></div>
<div style="position:absolute;left:36px;top:629px;width:1359px;height:1px;background:#111"></div>
<div style="position:absolute;left:36px;top:643px;width:1359px;height:1px;background:#111"></div>
<div style="position:absolute;left:36px;top:657px;width:1359px;height:1px;background:#111"></div>
<div style="position:absolute;left:36px;top:671px;width:1359px;height:1px;background:#111"></div>
<svg class="a" style="left:51px;top:333.00px" width="10" height="9" viewBox="0 0 10 9" fill="none" stroke="#000" stroke-linecap="round"><path d="M1.2 4.6L3.4 7.3" stroke-width="1.5"/><path d="M3.4 7.3L8.7 1" stroke-width="1.1"/></svg>
<div class="c" style="left:115px;top:331.0px;width:72px;text-align:center;padding-left:0px">103</div>
<div class="c" style="left:188px;top:331.0px;width:82px;text-align:left;padding-left:1.5px">AnAus</div>
<div style="position:absolute;left:226px;top:332px;width:12px;height:13px;background:#f28b8b;border:1px solid #111"><div style="font-size:10.5px;line-height:11px;text-align:center;color:#000">0</div></div>
<div class="c" style="left:303px;top:331.0px;width:261px;text-align:left;padding-left:1.5px">Relais3/C</div>
<svg class="a" style="left:674.8px;top:334.5px" width="12" height="9" viewBox="0 0 12 9"><path d="M1.8 5.5v3M6 5.5v3M10.2 5.5v3" stroke="#ccc" stroke-width="1"/><rect x="0.4" y="0.6" width="2.9" height="5" rx="1.3" fill="#c81010"/><rect x="4.6" y="0.6" width="2.9" height="5" rx="1.3" fill="#10a020"/><rect x="8.8" y="0.6" width="2.9" height="5" rx="1.3" fill="#1010c0"/></svg>
<div class="c" style="left:688px;top:331.0px;width:171px;text-align:left;padding-left:1.5px">LED einstellbar</div>
<div class="m" style="left:860px;top:331.0px;width:358px;text-align:left;padding-left:1.5px">Const(#LED, C3, #InCh, 0, 255)</div>
<div class="c" style="left:1219px;top:331.0px;width:32px;text-align:center;padding-left:0px">1</div>
<div class="c" style="left:1252px;top:331.0px;width:45px;text-align:center;padding-left:0px">C3-3</div>
<div class="c" style="left:1298px;top:331.0px;width:31px;text-align:center;padding-left:0px">1</div>
<div class="c" style="left:1330px;top:331.0px;width:32px;text-align:center;padding-left:0px">0</div>
<div class="c" style="left:1363px;top:331.0px;width:31px;text-align:center;padding-left:0px">0</div>
<svg class="a" style="left:51px;top:347.17px" width="10" height="9" viewBox="0 0 10 9" fill="none" stroke="#000" stroke-linecap="round"><path d="M1.2 4.6L3.4 7.3" stroke-width="1.5"/><path d="M3.4 7.3L8.7 1" stroke-width="1.1"/></svg>
<div class="c" style="left:115px;top:345.2px;width:72px;text-align:center;padding-left:0px">104</div>
<div class="c" style="left:188px;top:345.2px;width:82px;text-align:left;padding-left:1.5px">AnAus</div>
<div style="position:absolute;left:226px;top:346px;width:12px;height:13px;background:#f28b8b;border:1px solid #111"><div style="font-size:10.5px;line-height:11px;text-align:center;color:#000">0</div></div>
<div class="c" style="left:303px;top:345.2px;width:261px;text-align:left;padding-left:1.5px">Relais4/D</div>
<svg class="a" style="left:674.8px;top:348.5px" width="12" height="9" viewBox="0 0 12 9"><path d="M1.8 5.5v3M6 5.5v3M10.2 5.5v3" stroke="#ccc" stroke-width="1"/><rect x="0.4" y="0.6" width="2.9" height="5" rx="1.3" fill="#c81010"/><rect x="4.6" y="0.6" width="2.9" height="5" rx="1.3" fill="#10a020"/><rect x="8.8" y="0.6" width="2.9" height="5" rx="1.3" fill="#1010c0"/></svg>
<div class="c" style="left:688px;top:345.2px;width:171px;text-align:left;padding-left:1.5px">LED einstellbar</div>
<div class="m" style="left:860px;top:345.2px;width:358px;text-align:left;padding-left:1.5px">Const(#LED, C1, #InCh, 0, 255)</div>
<div class="c" style="left:1219px;top:345.2px;width:32px;text-align:center;padding-left:0px">2</div>
<div class="c" style="left:1252px;top:345.2px;width:45px;text-align:center;padding-left:0px">C1-1</div>
<div class="c" style="left:1298px;top:345.2px;width:31px;text-align:center;padding-left:0px">1</div>
<div class="c" style="left:1330px;top:345.2px;width:32px;text-align:center;padding-left:0px">0</div>
<div class="c" style="left:1363px;top:345.2px;width:31px;text-align:center;padding-left:0px">0</div>
<svg class="a" style="left:51px;top:361.34px" width="10" height="9" viewBox="0 0 10 9" fill="none" stroke="#000" stroke-linecap="round"><path d="M1.2 4.6L3.4 7.3" stroke-width="1.5"/><path d="M3.4 7.3L8.7 1" stroke-width="1.1"/></svg>
<div class="c" style="left:115px;top:359.3px;width:72px;text-align:center;padding-left:0px">105</div>
<div class="c" style="left:188px;top:359.3px;width:82px;text-align:left;padding-left:1.5px">AnAus</div>
<div style="position:absolute;left:226px;top:360px;width:12px;height:13px;background:#f28b8b;border:1px solid #111"><div style="font-size:10.5px;line-height:11px;text-align:center;color:#000">0</div></div>
<div class="c" style="left:303px;top:359.3px;width:261px;text-align:left;padding-left:1.5px">Relais5/E</div>
<svg class="a" style="left:674.8px;top:362.5px" width="12" height="9" viewBox="0 0 12 9"><path d="M1.8 5.5v3M6 5.5v3M10.2 5.5v3" stroke="#ccc" stroke-width="1"/><rect x="0.4" y="0.6" width="2.9" height="5" rx="1.3" fill="#c81010"/><rect x="4.6" y="0.6" width="2.9" height="5" rx="1.3" fill="#10a020"/><rect x="8.8" y="0.6" width="2.9" height="5" rx="1.3" fill="#1010c0"/></svg>
<div class="c" style="left:688px;top:359.3px;width:171px;text-align:left;padding-left:1.5px">LED einstellbar</div>
<div class="m" style="left:860px;top:359.3px;width:358px;text-align:left;padding-left:1.5px">Const(#LED, C2, #InCh, 0, 255)</div>
<div class="c" style="left:1219px;top:359.3px;width:32px;text-align:center;padding-left:0px">2</div>
<div class="c" style="left:1252px;top:359.3px;width:45px;text-align:center;padding-left:0px">C2-2</div>
<div class="c" style="left:1298px;top:359.3px;width:31px;text-align:center;padding-left:0px">1</div>
<div class="c" style="left:1330px;top:359.3px;width:32px;text-align:center;padding-left:0px">0</div>
<div class="c" style="left:1363px;top:359.3px;width:31px;text-align:center;padding-left:0px">0</div>
<svg class="a" style="left:51px;top:375.51px" width="10" height="9" viewBox="0 0 10 9" fill="none" stroke="#000" stroke-linecap="round"><path d="M1.2 4.6L3.4 7.3" stroke-width="1.5"/><path d="M3.4 7.3L8.7 1" stroke-width="1.1"/></svg>
<div class="c" style="left:115px;top:373.5px;width:72px;text-align:center;padding-left:0px">106</div>
<div class="c" style="left:188px;top:373.5px;width:82px;text-align:left;padding-left:1.5px">AnAus</div>
<div style="position:absolute;left:226px;top:375px;width:12px;height:13px;background:#f28b8b;border:1px solid #111"><div style="font-size:10.5px;line-height:11px;text-align:center;color:#000">0</div></div>
<div class="c" style="left:303px;top:373.5px;width:261px;text-align:left;padding-left:1.5px">Relais6/F</div>
<svg class="a" style="left:674.8px;top:377.5px" width="12" height="9" viewBox="0 0 12 9"><path d="M1.8 5.5v3M6 5.5v3M10.2 5.5v3" stroke="#ccc" stroke-width="1"/><rect x="0.4" y="0.6" width="2.9" height="5" rx="1.3" fill="#c81010"/><rect x="4.6" y="0.6" width="2.9" height="5" rx="1.3" fill="#10a020"/><rect x="8.8" y="0.6" width="2.9" height="5" rx="1.3" fill="#1010c0"/></svg>
<div class="c" style="left:688px;top:373.5px;width:171px;text-align:left;padding-left:1.5px">LED einstellbar</div>
<div class="m" style="left:860px;top:373.5px;width:358px;text-align:left;padding-left:1.5px">Const(#LED, C3, #InCh, 0, 255)</div>
<div class="c" style="left:1219px;top:373.5px;width:32px;text-align:center;padding-left:0px">2</div>
<div class="c" style="left:1252px;top:373.5px;width:45px;text-align:center;padding-left:0px">C3-3</div>
<div class="c" style="left:1298px;top:373.5px;width:31px;text-align:center;padding-left:0px">1</div>
<div class="c" style="left:1330px;top:373.5px;width:32px;text-align:center;padding-left:0px">0</div>
<div class="c" style="left:1363px;top:373.5px;width:31px;text-align:center;padding-left:0px">0</div>
<svg class="a" style="left:51px;top:389.68px" width="10" height="9" viewBox="0 0 10 9" fill="none" stroke="#000" stroke-linecap="round"><path d="M1.2 4.6L3.4 7.3" stroke-width="1.5"/><path d="M3.4 7.3L8.7 1" stroke-width="1.1"/></svg>
<div class="c" style="left:115px;top:387.7px;width:72px;text-align:center;padding-left:0px">107</div>
<div class="c" style="left:188px;top:387.7px;width:82px;text-align:left;padding-left:1.5px">AnAus</div>
<div style="position:absolute;left:226px;top:389px;width:12px;height:13px;background:#f28b8b;border:1px solid #111"><div style="font-size:10.5px;line-height:11px;text-align:center;color:#000">0</div></div>
<div class="c" style="left:303px;top:387.7px;width:261px;text-align:left;padding-left:1.5px">Relais7/G</div>
<svg class="a" style="left:674.8px;top:391.5px" width="12" height="9" viewBox="0 0 12 9"><path d="M1.8 5.5v3M6 5.5v3M10.2 5.5v3" stroke="#ccc" stroke-width="1"/><rect x="0.4" y="0.6" width="2.9" height="5" rx="1.3" fill="#c81010"/><rect x="4.6" y="0.6" width="2.9" height="5" rx="1.3" fill="#10a020"/><rect x="8.8" y="0.6" width="2.9" height="5" rx="1.3" fill="#1010c0"/></svg>
<div class="c" style="left:688px;top:387.7px;width:171px;text-align:left;padding-left:1.5px">LED einstellbar</div>
<div class="m" style="left:860px;top:387.7px;width:358px;text-align:left;padding-left:1.5px">Const(#LED, C1, #InCh, 0, 255)</div>
<div class="c" style="left:1219px;top:387.7px;width:32px;text-align:center;padding-left:0px">3</div>
<div class="c" style="left:1252px;top:387.7px;width:45px;text-align:center;padding-left:0px">C1-1</div>
<div class="c" style="left:1298px;top:387.7px;width:31px;text-align:center;padding-left:0px">1</div>
<div class="c" style="left:1330px;top:387.7px;width:32px;text-align:center;padding-left:0px">0</div>
<div class="c" style="left:1363px;top:387.7px;width:31px;text-align:center;padding-left:0px">0</div>
<svg class="a" style="left:51px;top:403.85px" width="10" height="9" viewBox="0 0 10 9" fill="none" stroke="#000" stroke-linecap="round"><path d="M1.2 4.6L3.4 7.3" stroke-width="1.5"/><path d="M3.4 7.3L8.7 1" stroke-width="1.1"/></svg>
<svg class="a" style="left:675px;top:404.5px" width="12" height="12" viewBox="0 0 12 12"><path d="M6 11.5L1 6.5C-0.3 5 -0.2 1.5 3 1c1.5-.2 2.5.7 3 1.7.5-1 1.5-1.9 3-1.7 3.2.5 3.3 4 2 5.5z" fill="#1818f0"/><path d="M6 2.7C5.5 1.700 4.500 .8 3 1 -.2 1.500-.3 5 1 6.5L3 8.5 6 6z" fill="#f01818"/><path d="M6 2.7c.5-1 1.5-1.900 3-1.700 3.2.5 3.3 4 2 5.5L9 8.5 6 6z" fill="#18b030"/><path d="M5 4l1 2 1-2" stroke="#40c0e0" stroke-width="1" fill="none"/></svg>
<div class="c" style="left:688px;top:401.9px;width:171px;text-align:left;padding-left:1.5px">Heartbeat LED</div>
<div class="m" style="left:860px;top:401.9px;width:358px;text-align:left;padding-left:1.5px">RGB Heartbeat(#LED)</div>
<div class="c" style="left:1219px;top:401.9px;width:32px;text-align:center;padding-left:0px">4</div>
<div class="c" style="left:1252px;top:401.9px;width:45px;text-align:center;padding-left:0px">1</div>
<div class="c" style="left:1298px;top:401.9px;width:31px;text-align:center;padding-left:0px">0</div>
<div class="c" style="left:1330px;top:401.9px;width:32px;text-align:center;padding-left:0px">0</div>
<div class="c" style="left:1363px;top:401.9px;width:31px;text-align:center;padding-left:0px">0</div>
<div style="position:absolute;left:859px;top:415px;width:360px;height:16px;border:2px solid #217346"></div>
<div style="position:absolute;left:1216px;top:428px;width:5px;height:5px;background:#217346;border:1px solid #fff"></div>
<div style="position:absolute;left:1578px;top:161px;width:22px;height:684px;background:#505050"></div>
<div style="position:absolute;left:1581px;top:162px;width:17px;height:683px;background:#3d3d3d;border-radius:9px"></div>
<svg class="a" style="left:1584px;top:166px" width="11" height="8" viewBox="0 0 11 8"><path d="M0.5 7.5L5.5 1l5 6.5z" fill="#d8d8d8" stroke="#d8d8d8" stroke-width="0.8" stroke-linejoin="round"/></svg>
<svg class="a" style="left:1584px;top:832px" width="11" height="8" viewBox="0 0 11 8"><path d="M0.5 0.5L5.5 7l5-6.5z" fill="#d8d8d8" stroke="#d8d8d8" stroke-width="0.8" stroke-linejoin="round"/></svg>
<div style="position:absolute;left:1585px;top:187px;width:9px;height:98px;background:#c8c8c8;border-radius:5px"></div>
<div style="position:absolute;left:895px;top:843px;width:114px;height:8px;background:#fff"></div>
<div style="position:absolute;left:0px;top:843px;width:903.5px;height:34px;background:#505050;border-top-right-radius:6px"></div>
<div style="position:absolute;left:1000px;top:843px;width:600px;height:34px;background:#505050;border-top-left-radius:6px"></div>
<svg class="a" style="left:26px;top:853px" width="8" height="12" viewBox="0 0 8 12" fill="none" stroke="#d0d0d0" stroke-width="1.3"><path d="M6.5 1L1.3 6 6.5 11"/></svg>
<svg class="a" style="left:60px;top:853px" width="8" height="12" viewBox="0 0 8 12" fill="none" stroke="#d8d8d8" stroke-width="1.3"><path d="M1.2 1l5.2 5-5.2 5"/></svg>
<div style="position:absolute;left:126.75px;top:853.05px;font-family:'Liberation Sans',sans-serif;font-size:15px;line-height:15px;color:#fff;white-space:nowrap;transform:scaleX(0.9543);transform-origin:0.00px 0;">Start</div>
<div style="position:absolute;left:183.25px;top:853.05px;font-family:'Liberation Sans',sans-serif;font-size:15px;line-height:15px;color:#fff;white-space:nowrap;transform:scaleX(0.8769);transform-origin:0.00px 0;">DCC</div>
<div style="position:absolute;left:238.75px;top:853.05px;font-family:'Liberation Sans',sans-serif;font-size:15px;line-height:15px;color:#fff;white-space:nowrap;transform:scaleX(0.9261);transform-origin:0.00px 0;">Selectrix</div>
<div style="position:absolute;left:320.00px;top:853.05px;font-family:'Liberation Sans',sans-serif;font-size:15px;line-height:15px;color:#fff;white-space:nowrap;transform:scaleX(0.9084);transform-origin:0.00px 0;">CAN</div>
<div style="position:absolute;left:376.25px;top:853.05px;font-family:'Liberation Sans',sans-serif;font-size:15px;line-height:15px;color:#fff;white-space:nowrap;transform:scaleX(0.9464);transform-origin:0.00px 0;">LNet</div>
<div style="position:absolute;left:433.75px;top:853.05px;font-family:'Liberation Sans',sans-serif;font-size:15px;line-height:15px;color:#fff;white-space:nowrap;transform:scaleX(0.8998);transform-origin:0.00px 0;">Examples</div>
<div style="position:absolute;left:521.25px;top:853.05px;font-family:'Liberation Sans',sans-serif;font-size:15px;line-height:15px;color:#fff;white-space:nowrap;transform:scaleX(0.8714);transform-origin:0.00px 0;">102_Beta_2</div>
<div style="position:absolute;left:619.50px;top:853.05px;font-family:'Liberation Sans',sans-serif;font-size:15px;line-height:15px;color:#fff;white-space:nowrap;transform:scaleX(0.8825);transform-origin:0.00px 0;">102_Beta_2 (2)</div>
<div style="position:absolute;left:738.75px;top:853.05px;font-family:'Liberation Sans',sans-serif;font-size:15px;line-height:15px;color:#fff;white-space:nowrap;transform:scaleX(0.9526);transform-origin:0.00px 0;">Lichtmaschine Vorlage</div>
<div style="position:absolute;left:170px;top:850px;width:1px;height:19px;background:#8c8270"></div>
<div style="position:absolute;left:224px;top:850px;width:1px;height:19px;background:#8c8270"></div>
<div style="position:absolute;left:306px;top:850px;width:1px;height:19px;background:#8c8270"></div>
<div style="position:absolute;left:362px;top:850px;width:1px;height:19px;background:#8c8270"></div>
<div style="position:absolute;left:419px;top:850px;width:1px;height:19px;background:#8c8270"></div>
<div style="position:absolute;left:507px;top:850px;width:1px;height:19px;background:#8c8270"></div>
<div style="position:absolute;left:604px;top:850px;width:1px;height:19px;background:#8c8270"></div>
<div style="position:absolute;left:723px;top:850px;width:1px;height:19px;background:#8c8270"></div>
<div style="position:absolute;left:898px;top:850px;width:1px;height:19px;background:#8c8270"></div>
<div style="position:absolute;left:1004px;top:850px;width:1px;height:19px;background:#8c8270"></div>
<div style="position:absolute;left:903.5px;top:843px;width:96.5px;height:30px;background:#fff;border-radius:0 0 5px 5px"></div>
<div style="position:absolute;left:912.30px;top:849.70px;font-family:'Liberation Sans',sans-serif;font-size:15px;line-height:15px;color:#1e1e1e;white-space:nowrap;transform:scaleX(0.8461);transform-origin:0.00px 0;">DCC_RELAIS</div>
<div style="position:absolute;left:912px;top:868px;width:80px;height:2px;background:#217346"></div>
<div class="a" style="left:1018px;top:851px;width:40px;overflow:hidden;white-space:nowrap;color:#fff;font-size:14.5px;line-height:18px">Config</div>
<div style="position:absolute;left:1067.3999999999999px;top:857.8px;width:2.4px;height:2.4px;background:#f0f0f0;border-radius:50%"></div>
<div style="position:absolute;left:1072.5px;top:857.8px;width:2.4px;height:2.4px;background:#f0f0f0;border-radius:50%"></div>
<div style="position:absolute;left:1077.6px;top:857.8px;width:2.4px;height:2.4px;background:#f0f0f0;border-radius:50%"></div>
<svg class="a" style="left:1099px;top:853px" width="14" height="14" viewBox="0 0 14 14" fill="none" stroke="#f0f0f0" stroke-width="1.3"><path d="M7 1v12M1 7h12"/></svg>
<div style="position:absolute;left:1139px;top:855px;width:2px;height:2px;background:#e0e0e0;border-radius:1px"></div>
<div style="position:absolute;left:1139px;top:859px;width:2px;height:2px;background:#e0e0e0;border-radius:1px"></div>
<div style="position:absolute;left:1139px;top:863px;width:2px;height:2px;background:#e0e0e0;border-radius:1px"></div>
<div style="position:absolute;left:1157.7px;top:851px;width:420px;height:17px;background:#3d3d3d;border-radius:8.5px"></div>
<svg class="a" style="left:1162.5px;top:854.5px" width="8" height="10" viewBox="0 0 8 10"><path d="M7 0.5v9L0.5 5z" fill="#c8c8c8" stroke="#c8c8c8" stroke-width="0.6" stroke-linejoin="round"/></svg>
<svg class="a" style="left:1566px;top:855px" width="8" height="10" viewBox="0 0 8 10"><path d="M0.5 0.5v9L7.5 5z" fill="#c8c8c8" stroke="#c8c8c8" stroke-width="0.6" stroke-linejoin="round"/></svg>
<div style="position:absolute;left:1175px;top:854px;width:263px;height:10px;background:#c4c4c4;border-radius:5px"></div>
<div style="position:absolute;left:0px;top:876px;width:1600px;height:2px;background:#3c3c3c"></div>
<div style="position:absolute;left:11.70px;top:882.84px;font-family:'Liberation Sans',sans-serif;font-size:12px;line-height:12px;color:#e0e0e0;white-space:nowrap;transform:scaleX(0.8708);transform-origin:0.00px 0;">Bereit</div>
<svg class="a" style="left:60px;top:880px" width="17" height="17" viewBox="0 0 17 17" fill="none" stroke="#e8e8e8" stroke-width="1.1"><circle cx="7" cy="2.5" r="1.8"/><path d="M1 5.5l6 1.5 6-1.5M7 7v4l-3 5M7 11l2 2"/><path d="M10 11l6 5M16 11l-6 5"/></svg>
<div style="position:absolute;left:79.70px;top:882.84px;font-family:'Liberation Sans',sans-serif;font-size:12px;line-height:12px;color:#fff;white-space:nowrap;transform:scaleX(0.8828);transform-origin:0.00px 0;font-weight:bold;">Barrierefreiheit: Untersuchen</div>
<div style="position:absolute;left:1286px;top:878px;width:41px;height:21px;background:#5c5c5c"></div>
<svg class="a" style="left:1298px;top:880px" width="16" height="16" viewBox="0 0 16 16" fill="none" stroke="#f0f0f0" stroke-width="1.3"><rect x="1" y="1" width="14" height="14"/><path d="M1 5.7h14M1 10.3h14M5.7 1v14M10.3 1v14"/></svg>
<svg class="a" style="left:1340px;top:880px" width="17" height="16" viewBox="0 0 17 16" fill="none" stroke="#f0f0f0" stroke-width="1.2"><rect x="1.3" y="1.9" width="14.4" height="12.4"/><rect x="4.5" y="3.8" width="8" height="8.8" stroke-width="1"/><path d="M6 6.3h5M6 8.3h5M6 10.3h5" stroke-width="0.9"/></svg>
<svg class="a" style="left:1382px;top:880px" width="16" height="16" viewBox="0 0 16 16" fill="none" stroke="#f0f0f0" stroke-width="1.2"><rect x="1" y="1.3" width="14.2" height="12.8"/><path d="M1 8.7H9.6V1.3M5.4 1.3V8.7"/></svg>
<div style="position:absolute;left:1416.5px;top:888px;width:8px;height:1.3px;background:#e8e8e8"></div>
<div style="position:absolute;left:1430px;top:888px;width:104px;height:1px;background:#bdbdbd"></div>
<div style="position:absolute;left:1468px;top:881px;width:4px;height:13px;background:#d8d8d8"></div>
<div style="position:absolute;left:1483px;top:884px;width:1px;height:7px;background:#bdbdbd"></div>
<svg class="a" style="left:1539px;top:883px" width="9" height="10" viewBox="0 0 9 10" fill="none" stroke="#e8e8e8" stroke-width="1.2"><path d="M4.5 0v10M0 5h9"/></svg>
<div style="position:absolute;left:1560.70px;top:882.54px;font-family:'Liberation Sans',sans-serif;font-size:12px;line-height:12px;color:#e8e8e8;white-space:nowrap;transform:scaleX(0.8665);transform-origin:0.00px 0;">79 %</div>
<div style="position:absolute;left:0px;top:898px;width:1600px;height:1px;background:#3e3e3e"></div>
<div style="position:absolute;left:0px;top:899px;width:1600px;height:1px;background:#f4f4f4"></div>
</body></html>
